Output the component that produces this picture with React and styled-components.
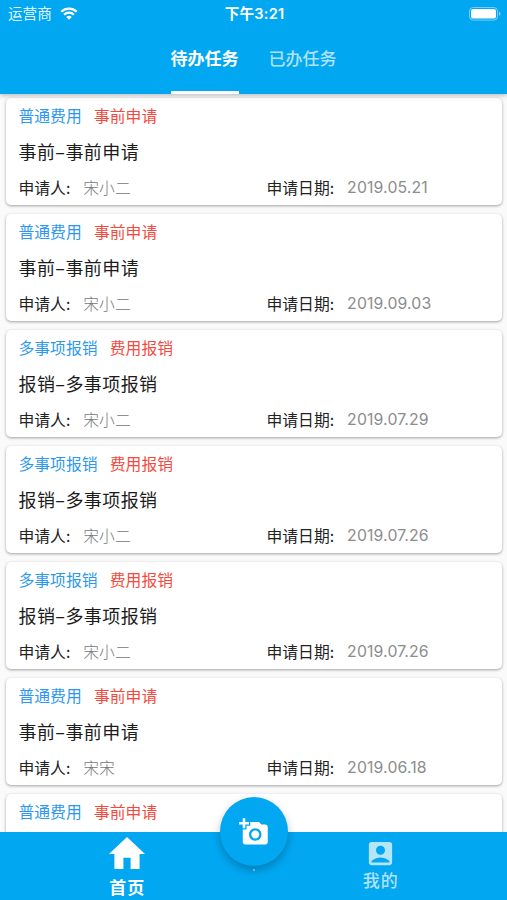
import styled, { createGlobalStyle } from 'styled-components';
import { MdAccountBox, MdAddAPhoto } from 'react-icons/md';

const TASKS = [
    { type: '普通费用', stage: '事前申请', title: '事前–事前申请', applicant: '宋小二', date: '2019.05.21' },
    { type: '普通费用', stage: '事前申请', title: '事前–事前申请', applicant: '宋小二', date: '2019.09.03' },
    { type: '多事项报销', stage: '费用报销', title: '报销–多事项报销', applicant: '宋小二', date: '2019.07.29' },
    { type: '多事项报销', stage: '费用报销', title: '报销–多事项报销', applicant: '宋小二', date: '2019.07.26' },
    { type: '多事项报销', stage: '费用报销', title: '报销–多事项报销', applicant: '宋小二', date: '2019.07.26' },
    { type: '普通费用', stage: '事前申请', title: '事前–事前申请', applicant: '宋宋', date: '2019.06.18' },
    { type: '普通费用', stage: '事前申请' },
];

const TaskCard = ({ task }) => (
    <Card>
        <Row>
            <Tag color="#2c98f0">{task.type}</Tag>
            <Tag color="#f44a3e">{task.stage}</Tag>
        </Row>
        {task.title && (
            <>
                <Row>
                    <Title>{task.title}</Title>
                </Row>
                <Row>
                    <Field>
                        <Label>申请人:</Label>
                        <Value>{task.applicant}</Value>
                    </Field>
                    <Field>
                        <Label>申请日期:</Label>
                        <DateValue>{task.date}</DateValue>
                    </Field>
                </Row>
            </>
        )}
    </Card>
);

const App = () => {
    return (
        <Container>
            <GlobalStyle />
            <Header>
                <StatusBar>
                    <Carrier>
                        <CarrierName>运营商</CarrierName>
                        <svg width="18" height="14" viewBox="0 0 18 14" fill="none" stroke="#fff" strokeWidth="2.3">
                            <path d="M1.3 4.7a11 11 0 0 1 15.4 0" />
                            <path d="M4.1 7.7a7 7 0 0 1 9.8 0" />
                            <path d="M9 12.8 6.2 10a4 4 0 0 1 5.6 0z" fill="#fff" stroke="none" />
                        </svg>
                    </Carrier>
                    <Clock>下午3:21</Clock>
                    <Battery>
                        <svg width="32" height="14" viewBox="0 0 32 14">
                            <rect x="0.5" y="0.5" width="28" height="12.6" rx="3.6" fill="none" stroke="#fff" strokeOpacity="0.45" />
                            <rect x="2" y="2" width="25" height="9.6" rx="2.2" fill="#fff" />
                            <path d="M30 4.7c2 .6 2 3.6 0 4.2z" fill="#fff" fillOpacity="0.5" />
                        </svg>
                    </Battery>
                </StatusBar>
                <Tabs>
                    <Tab $active>待办任务</Tab>
                    <Tab>已办任务</Tab>
                </Tabs>
            </Header>

            <TaskList>
                {TASKS.map((task, index) => (
                    <TaskCard key={index} task={task} />
                ))}
            </TaskList>

            <BottomBar>
                <NavItem $active>
                    <svg width="36" height="32" viewBox="2 3 20 17" preserveAspectRatio="none" fill="currentColor">
                        <path d="M10 20v-6h4v6h5v-8h3L12 3 2 12h3v8z" />
                    </svg>
                    <NavLabel>首页</NavLabel>
                </NavItem>
                <NavItem>
                    <MdAccountBox size={31} />
                    <NavLabel>我的</NavLabel>
                </NavItem>
                <CameraButton>
                    <MdAddAPhoto size={30} />
                </CameraButton>
                <Dot />
            </BottomBar>
        </Container>
    );
};

export default App;

const GlobalStyle = createGlobalStyle`
    * {
        box-sizing: border-box;
    }

    body {
        margin: 0;
        font-family: 'Noto Sans CJK SC', sans-serif;
    }
`;

const Container = styled.div`
    display: flex;
    flex-direction: column;
    width: 507px;
    height: 900px;
    overflow: hidden;
    background-color: #fafafa;
`;

const Header = styled.header`
    position: relative;
    z-index: 1;
    flex: none;
    height: 94px;
    background-color: #02a7f2;
    color: #fff;
    box-shadow: 0 1px 5px rgba(0, 0, 0, 0.3);
`;

const StatusBar = styled.div`
    display: grid;
    grid-template-columns: 1fr auto 1fr;
    align-items: center;
    height: 27px;
    padding: 0 6px 0 8px;
`;

const Carrier = styled.div`
    display: flex;
    align-items: center;
    gap: 8px;
`;

const CarrierName = styled.span`
    padding-bottom: 2px;
    color: rgba(255, 255, 255, 0.9);
    font-size: 14.6px;
    line-height: 25px;
`;

const Clock = styled.div`
    padding-top: 1px;
    font-family: Inter, 'Noto Sans CJK SC', sans-serif;
    font-size: 14.6px;
    font-weight: 600;
    letter-spacing: 0.2px;
    line-height: 26px;
`;

const Battery = styled.div`
    display: flex;
    justify-content: flex-end;
`;

const Tabs = styled.div`
    display: flex;
    justify-content: center;
    gap: 30px;
    height: 67px;
`;

const Tab = styled.div`
    height: 67px;
    border-bottom: 3px solid ${(props) => (props.$active ? '#fff' : 'transparent')};
    color: ${(props) => (props.$active ? '#fff' : 'rgba(255, 255, 255, 0.7)')};
    font-size: 17px;
    font-weight: ${(props) => (props.$active ? 700 : 500)};
    line-height: 61px;
`;

const TaskList = styled.main`
    flex: 1;
    min-height: 0;
    display: flex;
    flex-direction: column;
    gap: 9px;
    padding: 4px 5px 0 6px;
    overflow: hidden;
`;

const Card = styled.section`
    flex: none;
    height: 107px;
    padding-left: 12.5px;
    border-radius: 5px;
    background-color: #fff;
    box-shadow: 0 1px 3px rgba(0, 0, 0, 0.36);
`;

const Row = styled.div`
    display: flex;
    align-items: center;
    height: 36px;
    padding-bottom: 2px;
`;

const Tag = styled.span`
    margin-right: 12.3px;
    color: ${(props) => props.color};
    font-size: 15.8px;
`;

const Title = styled.span`
    color: #1c1c1c;
    font-size: 18px;
    letter-spacing: 0.42px;
`;

const Field = styled.div`
    display: flex;
    align-items: center;
    flex: 0 0 248px;
`;

const Label = styled.span`
    margin-right: 13px;
    color: #222;
    font-size: 15.8px;
`;

const Value = styled.span`
    color: #777;
    font-size: 15.8px;
    font-weight: 300;
`;

const DateValue = styled(Value)`
    color: #8c8c8c;
    font-family: Inter, sans-serif;
    font-weight: 400;
    letter-spacing: 0.15px;
`;

const BottomBar = styled.nav`
    position: relative;
    flex: none;
    display: flex;
    height: 68px;
    background-color: #02a7f2;
`;

const NavItem = styled.div`
    flex: 1;
    display: flex;
    flex-direction: column;
    align-items: center;
    gap: ${(props) => (props.$active ? '6px' : '0')};
    padding-top: ${(props) => (props.$active ? '5px' : '6px')};
    color: ${(props) => (props.$active ? '#fff' : 'rgba(255, 255, 255, 0.7)')};
    font-size: 17px;
    font-weight: ${(props) => (props.$active ? 700 : 500)};
    line-height: ${(props) => (props.$active ? '24px' : '22px')};
`;

const NavLabel = styled.span`
    padding-left: 1px;
    letter-spacing: 1px;
`;

const CameraButton = styled.button`
    position: absolute;
    top: -35px;
    left: 220px;
    display: flex;
    align-items: center;
    justify-content: center;
    width: 68px;
    height: 69px;
    padding: 0;
    border: none;
    border-radius: 50%;
    background-color: #02a7f2;
    color: #fff;
    box-shadow: 0 4px 8px rgba(0, 0, 0, 0.25);
`;

const Dot = styled.i`
    position: absolute;
    top: 37px;
    left: 253px;
    width: 2px;
    height: 2px;
    border-radius: 50%;
    background-color: rgba(255, 255, 255, 0.5);
`;
